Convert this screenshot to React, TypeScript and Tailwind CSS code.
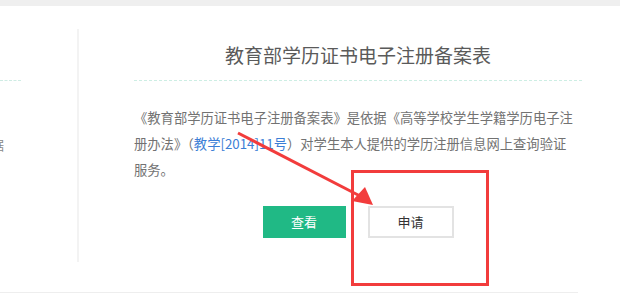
export default function App() {
  return (
    <div
      className="relative w-[620px] h-[295px] overflow-hidden bg-white"
      style={{ fontFamily: '"Noto Sans CJK SC", "Liberation Sans", sans-serif' }}
    >
      <div className="h-[6px] bg-[#efefef]" />

      <div className="flex h-[286px]">
        {/* left column (cut off at the edge) */}
        <div className="w-[77px] shrink-0">
          <div className="mt-[74px] w-[21px] border-t border-dashed border-[#cfece4]" />
          <div className="mt-[25px] w-[4px] overflow-hidden flex flex-col items-end text-[13px] leading-[26px] text-[#888]">
            <span className="whitespace-nowrap">查询：</span>
            <span className="whitespace-nowrap">依据</span>
          </div>
        </div>
        <div className="w-[2px] shrink-0 mt-[23px] h-[233px] bg-[#f3f3f3]" />

        {/* main content */}
        <div className="flex flex-col pl-[55px] w-[503px]">
          <div className="mt-[35px] pb-[11px] border-b border-dashed border-[#cdeee4] text-center text-[19px] leading-[28px] text-[#5a5a5a]">
            教育部学历证书电子注册备案表
          </div>

          <div className="mt-[24px] text-[13.3px] leading-[26px] text-[#727272] whitespace-nowrap">
            <div>《教育部学历证书电子注册备案表》是依据《高等学校学生学籍学历电子注</div>
            <div>
              册办法》（<span className="text-[#3b7ed6]">教学[2014]11号</span>）对学生本人提供的学历注册信息网上查询验证
            </div>
            <div>服务。</div>
          </div>

          <div className="mt-[23px] flex justify-center gap-[22px]">
            <button className="w-[83px] h-[32px] bg-[#20b985] text-white text-[13px]">查看</button>
            <button className="w-[86px] h-[32px] border-2 border-[#e3e3e3] bg-white text-[#333] text-[13px]">
              申请
            </button>
          </div>
        </div>
      </div>

      <div className="w-[578px] h-[1px] bg-[#eeeeee]" />

      {/* annotation overlay */}
      <svg className="absolute inset-0 pointer-events-none" width="620" height="295" viewBox="0 0 620 295">
        <rect x="352.5" y="171.5" width="135" height="113" fill="none" stroke="#f23c3c" strokeWidth="3" />
        <line x1="238" y1="133" x2="360" y2="196" stroke="#f23c3c" strokeWidth="3" />
        <polygon points="373,205 352,201 365,187" fill="#f23c3c" />
      </svg>
    </div>
  )
}
